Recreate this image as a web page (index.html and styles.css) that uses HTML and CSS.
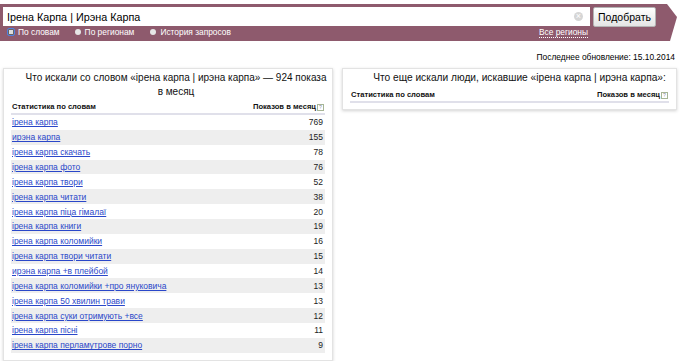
FILE: index.html
```html
<!DOCTYPE html>
<html>
<head>
<meta charset="utf-8">
<link rel="stylesheet" href="styles.css">
</head>
<body>
<div class="band">
  <div class="search-row">
    <div class="input">
      <span class="input-text">Ірена Карпа | Ирэна Карпа</span>
      <span class="clear">&times;</span>
    </div>
    <button class="btn">Подобрать</button>
  </div>
  <div class="radio-row">
    <label class="radio sel"><span class="dot"></span>По словам</label>
    <label class="radio"><span class="dot"></span>По регионам</label>
    <label class="radio"><span class="dot"></span>История запросов</label>
    <span class="regions">Все регионы</span>
  </div>
</div>
<div class="updated">Последнее обновление: 15.10.2014</div>
<div class="boxes">
  <div class="box left">
    <div class="title">Что искали со словом «ірена карпа | ирэна карпа» — 924 показа<br>в месяц</div>
    <div class="table">
      <div class="thead"><span>Статистика по словам</span><span>Показов в месяц<i class="help">?</i></span></div>
      <div class="row"><a href="#">ірена карпа</a><span>769</span></div>
      <div class="row"><a href="#">ирэна карпа</a><span>155</span></div>
      <div class="row"><a href="#">ірена карпа скачать</a><span>78</span></div>
      <div class="row"><a href="#">ірена карпа фото</a><span>76</span></div>
      <div class="row"><a href="#">ірена карпа твори</a><span>52</span></div>
      <div class="row"><a href="#">ірена карпа читати</a><span>38</span></div>
      <div class="row"><a href="#">ірена карпа піца гімалаї</a><span>20</span></div>
      <div class="row"><a href="#">ірена карпа книги</a><span>19</span></div>
      <div class="row"><a href="#">ірена карпа коломийки</a><span>16</span></div>
      <div class="row"><a href="#">ірена карпа твори читати</a><span>15</span></div>
      <div class="row"><a href="#">ирэна карпа +в плейбой</a><span>14</span></div>
      <div class="row"><a href="#">ірена карпа коломийки +про януковича</a><span>13</span></div>
      <div class="row"><a href="#">ірена карпа 50 хвилин трави</a><span>13</span></div>
      <div class="row"><a href="#">ірена карпа суки отримують +все</a><span>12</span></div>
      <div class="row"><a href="#">ірена карпа пісні</a><span>11</span></div>
      <div class="row"><a href="#">ірена карпа перламутрове порно</a><span>9</span></div>
    </div>
  </div>
  <div class="box right">
    <div class="title">Что еще искали люди, искавшие «ірена карпа | ирэна карпа»:</div>
    <div class="table">
      <div class="thead"><span>Статистика по словам</span><span>Показов в месяц<i class="help">?</i></span></div>
    </div>
  </div>
</div>
</body>
</html>
```
FILE: styles.css
```css
* { box-sizing: border-box; }
body {
  margin: 0;
  width: 680px;
  font-family: "Liberation Sans", Arial, sans-serif;
  color: #000;
  background: #fff;
}
.band {
  margin-top: 4px;
  width: 677px;
  height: 37px;
  background: #8e5a6d;
  clip-path: polygon(0 0, 667px 0, 677px 13px, 670px 37px, 0 37px);
  padding: 3px 0 0 3px;
}
.search-row { display: flex; align-items: stretch; height: 19px; }
.input {
  width: 587px;
  background: #fff;
  display: flex;
  align-items: center;
  justify-content: space-between;
  padding: 0 7px 0 4px;
}
.input-text { font-size: 10.8px; color: #000; }
.clear {
  width: 9px; height: 9px; border-radius: 50%;
  background: #d6d6d6; color: #fff;
  font-size: 9px; line-height: 9px; text-align: center;
}
.btn {
  margin-left: 3px;
  width: 63px;
  height: 20px;
  border: 1px solid #b4b4b4;
  border-radius: 2px;
  background: linear-gradient(#ffffff, #e4e4e4);
  font-family: "Liberation Sans", Arial, sans-serif;
  font-size: 10.5px;
  color: #000;
  padding: 0;
}
.radio-row {
  display: flex;
  align-items: center;
  height: 12px;
  margin-top: 0;
  font-size: 8.4px;
  color: #fff;
}
.radio { display: flex; align-items: center; }
.radio .dot {
  width: 6px; height: 6px; border-radius: 50%;
  background: #e6e6e6; margin: 0 4px 0 0;
}
.radio.sel { margin-left: 5px; margin-right: 15px; }
.radio.sel .dot {
  width: 6px; height: 6px; border-radius: 1px;
  background: #dcdcdc; outline: 1.5px solid #4f7fe0;
  border: 1px solid #666;
  margin: 0 4px 0 0;
}
.radio:nth-child(2) { margin-right: 16px; }
.regions {
  margin-left: auto;
  margin-right: 89px;
  border-bottom: 1px dotted #fff;
  line-height: 10px;
}
.updated {
  text-align: right;
  font-size: 8.4px;
  padding-right: 5px;
  margin-top: 11px;
  height: 12px;
}
.boxes {
  display: flex;
  align-items: flex-start;
  gap: 9px;
  margin-top: 4px;
  padding-left: 3px;
}
.box {
  border: 1px solid #e3e3e3;
  box-shadow: 0 1px 3px rgba(0,0,0,0.18);
  background: #fff;
  padding: 2px 7px 7px 7px;
}
.box.left { width: 330px; }
.box.right { width: 335px; padding-bottom: 6px; }
.title {
  text-align: center;
  font-size: 10.2px;
  line-height: 14px;
  padding: 0 0 0 20px;
  color: #111;
}
.box.left .title { padding-left: 4px; margin-right: -12px; font-size: 10px; }
.table { margin-top: 1px; font-size: 8.5px; }
.box.right .table { margin-top: 3px; }
.thead {
  display: flex;
  justify-content: space-between;
  align-items: center;
  font-weight: bold;
  font-size: 7.6px;
  height: 15px;
  border-bottom: 2px solid #e0e0ea;
  padding: 0 1px 0 1px;
  color: #111;
}
.help {
  display: inline-block;
  width: 7px; height: 7px;
  border: 1px solid #a7b596;
  font-size: 5px; line-height: 5px;
  font-style: normal; font-weight: normal;
  text-align: center; color: #889;
  margin-left: 1px;
  vertical-align: 0px;
}
.row {
  display: flex;
  justify-content: space-between;
  align-items: center;
  height: 14.86px;
  padding: 0 2px 0 1px;
}
.row:nth-child(odd) { background: #eeeeee; }
.row a { color: #2a47c9; text-decoration: underline; }
.row span { color: #222; }
```
